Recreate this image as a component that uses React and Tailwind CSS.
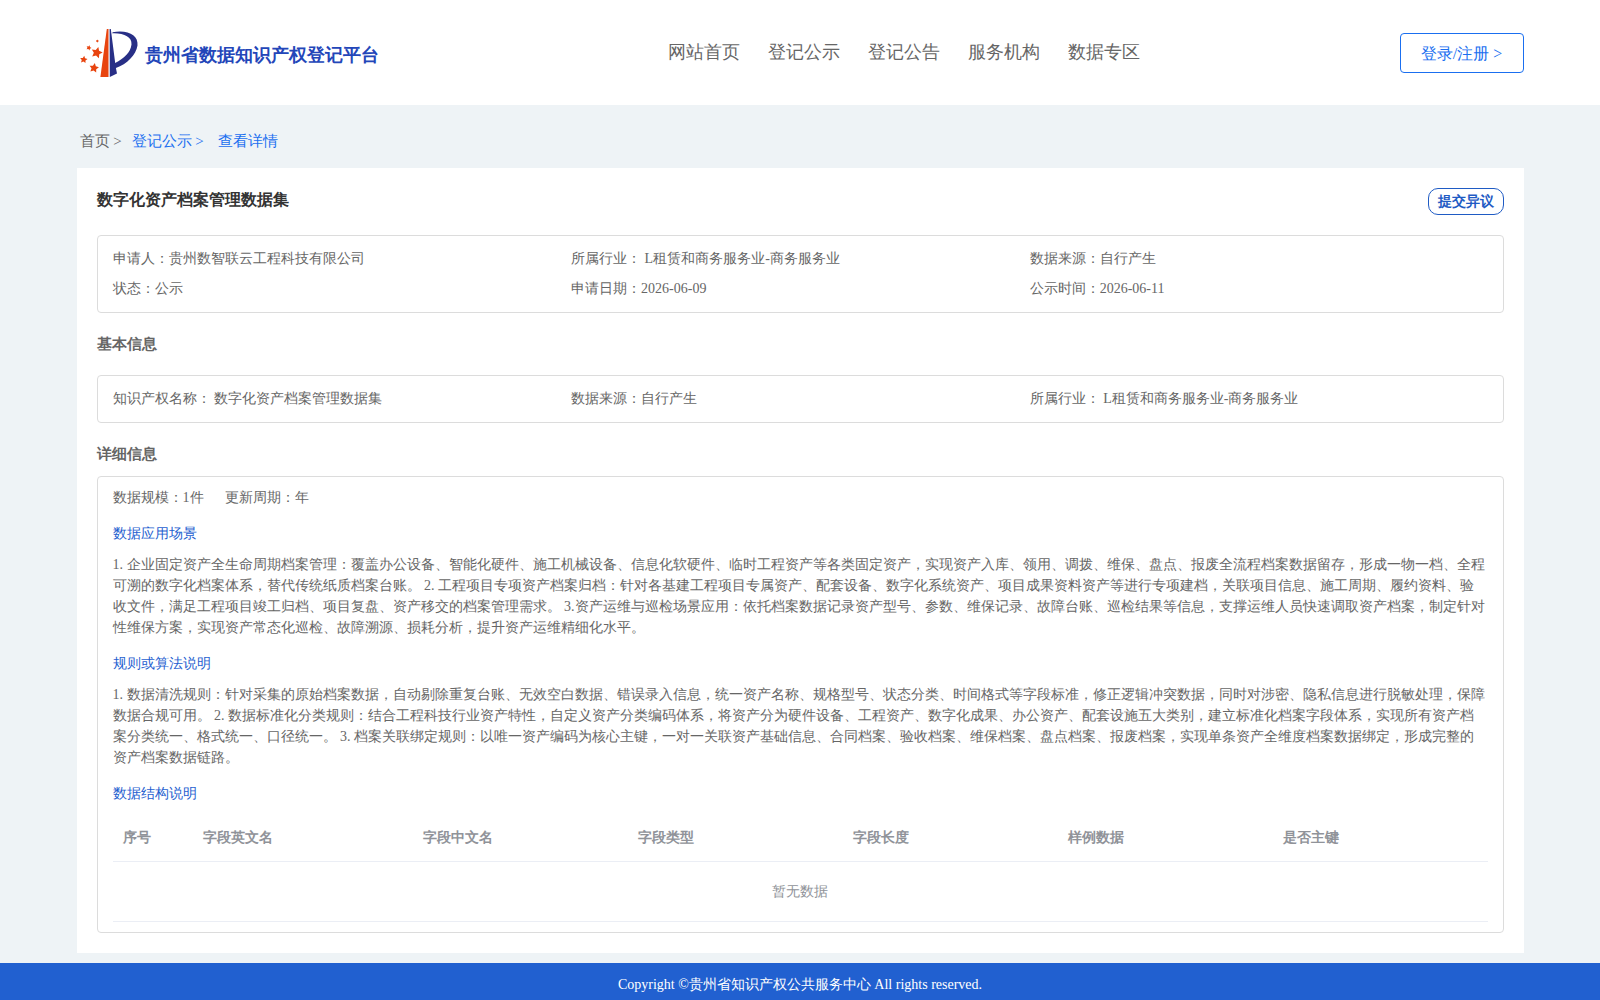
const nav = ['网站首页', '登记公示', '登记公告', '服务机构', '数据专区'];
const columns = ['字段英文名', '字段中文名', '字段类型', '字段长度', '样例数据', '是否主键'];

const scene =
  '1. 企业固定资产全生命周期档案管理：覆盖办公设备、智能化硬件、施工机械设备、信息化软硬件、临时工程资产等各类固定资产，实现资产入库、领用、调拨、维保、盘点、报废全流程档案数据留存，形成一物一档、全程可溯的数字化档案体系，替代传统纸质档案台账。 2. 工程项目专项资产档案归档：针对各基建工程项目专属资产、配套设备、数字化系统资产、项目成果资料资产等进行专项建档，关联项目信息、施工周期、履约资料、验收文件，满足工程项目竣工归档、项目复盘、资产移交的档案管理需求。 3.资产运维与巡检场景应用：依托档案数据记录资产型号、参数、维保记录、故障台账、巡检结果等信息，支撑运维人员快速调取资产档案，制定针对性维保方案，实现资产常态化巡检、故障溯源、损耗分析，提升资产运维精细化水平。';
const rules =
  '1. 数据清洗规则：针对采集的原始档案数据，自动剔除重复台账、无效空白数据、错误录入信息，统一资产名称、规格型号、状态分类、时间格式等字段标准，修正逻辑冲突数据，同时对涉密、隐私信息进行脱敏处理，保障数据合规可用。 2. 数据标准化分类规则：结合工程科技行业资产特性，自定义资产分类编码体系，将资产分为硬件设备、工程资产、数字化成果、办公资产、配套设施五大类别，建立标准化档案字段体系，实现所有资产档案分类统一、格式统一、口径统一。 3. 档案关联绑定规则：以唯一资产编码为核心主键，一对一关联资产基础信息、合同档案、验收档案、维保档案、盘点档案、报废档案，实现单条资产全维度档案数据绑定，形成完整的资产档案数据链路。';

function Star({ x, y, r, rotate }) {
  const points = Array.from({ length: 10 }, (_, i) => {
    const radius = i % 2 ? r * 0.5 : r;
    const angle = ((i * 36 - 90 + rotate) * Math.PI) / 180;
    return `${(x + radius * Math.cos(angle)).toFixed(2)},${(y + radius * Math.sin(angle)).toFixed(2)}`;
  }).join(' ');
  return <polygon points={points} fill="#e8440f" />;
}

function Logo() {
  return (
    <svg className="h-[52px] w-[60px]" viewBox="0 0 60 52">
      <Star x={16.8} y={25.7} r={5.9} rotate={15} />
      <Star x={14} y={41} r={5} rotate={10} />
      <Star x={3.7} y={32.6} r={3.9} rotate={8} />
      <Star x={8.8} y={20.8} r={2.7} rotate={20} />
      <Star x={17.4} y={14} r={1.7} rotate={20} />
      <path d="M26.8 2H28.5V50H20.4Z" fill="#e8440f" />
      <path d="M29.6 2H30.800L35.2 36C44 31.500 50.500 25.500 51.500 17.500C52 10 44 6 32.500 6.4V5.2C48 2.5 58.5 8 57.5 18.500C56 28 47 37 35.900 41L37 46.500L29.800 50Z" fill="#282f86" />
    </svg>
  );
}

function Box({ className, children }) {
  return <div className={`rounded-[4px] border border-[#dcdcdc] px-[15px] ${className}`}>{children}</div>;
}

export default function App() {
  return (
    <div className="flex h-[1000px] w-[1600px] flex-col overflow-hidden bg-[#eef3f6] font-['Liberation_Serif',serif] text-[14px] text-[#666]">
      <header className="flex h-[105px] shrink-0 items-start bg-white pr-[76px] pl-[80px]">
        <div className="flex w-[588px] pt-[27px]">
          <Logo />
          <div className="ml-[5px] pt-[13px] text-[18px] leading-[30px] font-bold text-[#2346b9]">贵州省数据知识产权登记平台</div>
        </div>
        <nav className="flex flex-1 gap-[28px] pt-[37px] text-[18px] leading-[30px]">
          {nav.map((t) => (
            <a key={t}>{t}</a>
          ))}
        </nav>
        <button className="mt-[33px] h-[40px] w-[124px] rounded-[4px] border border-[#1a6ff0] pr-[1px] text-[16px] leading-[39px] text-[#1a6ff0]">登录/注册 &gt;</button>
      </header>

      <div className="mx-auto flex h-[63px] w-[1447px] shrink-0 pt-[21px] pl-[3px] text-[15px] leading-[30px] text-[#1a6ff0]">
        <span className="w-[52px] text-[#666]">首页 &gt;</span>
        <span className="w-[86px]">登记公示 &gt;</span>
        <span>查看详情</span>
      </div>

      <main className="mx-auto h-[785px] w-[1447px] shrink-0 bg-white px-[20px] pt-[20px]">
        <div className="flex h-[47px] items-start justify-between">
          <h1 className="text-[16px] leading-[24px] font-bold text-[#333]">数字化资产档案管理数据集</h1>
          <button className="h-[27px] w-[76px] rounded-[10px] border border-[#1f5bc4] text-[14px] leading-[25px] font-bold text-[#1f5bc4]">提交异议</button>
        </div>

        <Box className="grid h-[78px] grid-cols-[458.6px_458.6px_1fr] content-start pt-[8px] leading-[30px]">
          <div>申请人：贵州数智联云工程科技有限公司</div>
          <div>所属行业： L租赁和商务服务业-商务服务业</div>
          <div>数据来源：自行产生</div>
          <div>状态：公示</div>
          <div>申请日期：2026-06-09</div>
          <div>公示时间：2026-06-11</div>
        </Box>

        <h2 className="h-[62px] pt-[16px] text-[15px] leading-[30px] font-bold">基本信息</h2>
        <Box className="grid h-[48px] grid-cols-[458.6px_458.6px_1fr] content-start pt-[8px] leading-[30px]">
          <div>知识产权名称： 数字化资产档案管理数据集</div>
          <div>数据来源：自行产生</div>
          <div>所属行业： L租赁和商务服务业-商务服务业</div>
        </Box>

        <h2 className="h-[53px] pt-[16px] text-[15px] leading-[30px] font-bold">详细信息</h2>
        <Box className="h-[457px]">
          <div className="flex h-[42px] gap-[21px] pt-[6px] leading-[30px]">
            <span>数据规模：1件</span>
            <span>更新周期：年</span>
          </div>
          <h3 className="leading-[30px] text-[#1f5fd0]">数据应用场景</h3>
          <p className="mt-[5px] h-[95px] leading-[21px]">{scene}</p>
          <h3 className="leading-[30px] text-[#1f5fd0]">规则或算法说明</h3>
          <p className="mt-[5px] h-[95px] leading-[21px]">{rules}</p>
          <h3 className="leading-[30px] text-[#1f5fd0]">数据结构说明</h3>
          <div className="mt-[5px] grid h-[48px] grid-cols-[80px_220px_repeat(4,215px)_215px] border-b border-[#ebeef5] leading-[47px] font-bold text-[#909399]">
            <div className="pl-[10px]">序号</div>
            {columns.map((c) => (
              <div key={c} className="pl-[10px]">{c}</div>
            ))}
          </div>
          <div className="h-[60px] border-b border-[#ebeef5] text-center leading-[60px] text-[#909399]">暂无数据</div>
        </Box>
      </main>

      <footer className="mt-[10px] flex-1 bg-[#2160d0] pt-[7px] text-center leading-[30px] text-white">
        Copyright ©贵州省知识产权公共服务中心 All rights reserved.
      </footer>
    </div>
  );
}
